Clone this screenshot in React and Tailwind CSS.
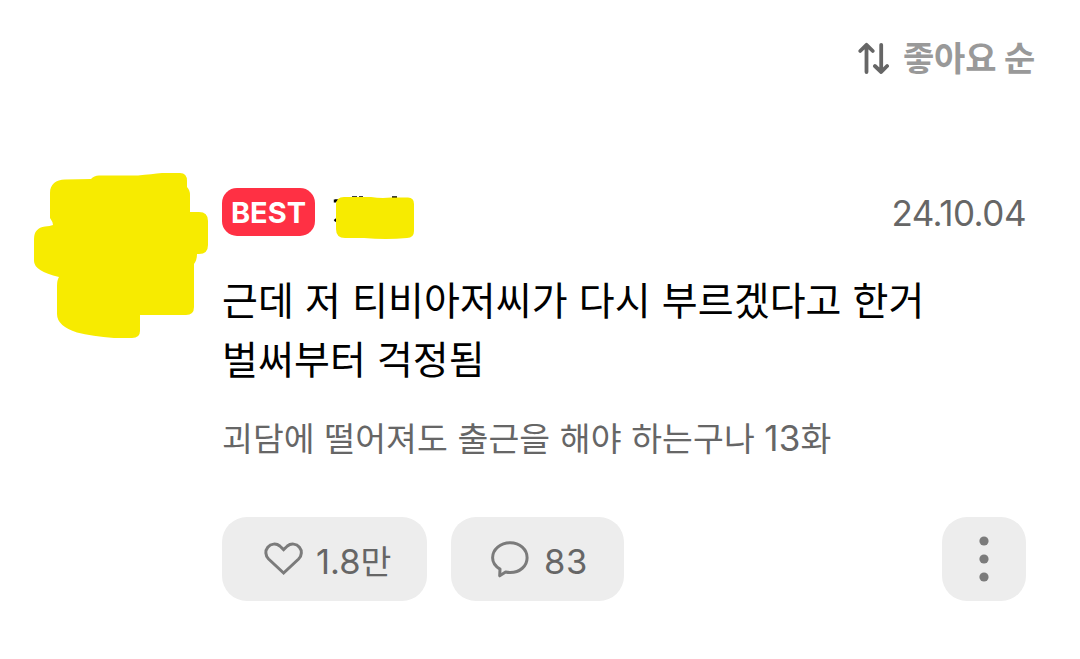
const ink = "font-['Inter','Noto_Sans_CJK_KR',sans-serif]";

function SortIcon() {
  return (
    <svg width="32" height="34" viewBox="0 0 32 34" className="shrink-0" fill="none" stroke="#666" strokeWidth="3.8" strokeLinecap="round" strokeLinejoin="round">
      <path d="M9.5 30V3.2M3.2 9L9.5 2.8L15.8 9" />
      <path d="M24.2 2.8V29.5M17.9 24L24.2 30L30.1 24" />
    </svg>
  );
}

function HeartIcon() {
  return (
    <svg width="40" height="34" viewBox="0 0 40 34" className="shrink-0" fill="none" stroke="#7b7b7b" strokeWidth="3" strokeLinejoin="miter">
      <path d="M19.6 31L4.6 17C1.2 13.6 1 8.6 3.8 5.2C6.8 1.6 12.2 1 15.8 4L19.6 7.6L23.4 4C27 1 32.4 1.6 35.4 5.2C38.2 8.6 38 13.6 34.6 17Z" />
    </svg>
  );
}

function BubbleIcon() {
  return (
    <svg width="38" height="37" viewBox="0 0 38 37" className="shrink-0" fill="none" stroke="#7b7b7b" strokeWidth="3" strokeLinejoin="round">
      <path d="M19.2 1.7C28.9 1.7 36.1 8.6 36.1 16.7C36.1 25.1 28.9 31.5 19.2 31.5C17.6 31.5 16 31.3 14.6 31L8.7 34.8L9 28.1C4.6 25.4 1.6 21.3 1.6 16.7C1.6 8.6 9.4 1.7 19.2 1.7Z" />
    </svg>
  );
}

function AvatarCover() {
  return (
    <svg width="174" height="166" viewBox="34 173 174 166" className="block" fill="#f7eb00">
      <path d="M50 193C50 184 56 180 65 179.5Q79 179 91 179Q94 175.5 99 175.5L138 175.5Q152 174 162 173L180 173Q187 173 187 181V187Q190 190 190 195V212H199Q208 212 208 221V245Q208 254 199 254H197Q197 260 194 264V307Q194 315 186 315H140V331Q140 338 132 338H114Q92 336 77 332.5Q57 326 57 314V286Q57 280 59 277Q34 271 34 261V239Q34 228 45 226.5Q50 226 53 225Q53 222 50 218Z" />
    </svg>
  );
}

export default function App() {
  return (
    <main className={`${ink} flex h-[659px] w-[1080px] flex-col overflow-hidden bg-white text-[#666]`}>
      <header className="flex h-[118px] items-center justify-end gap-[14px] pr-[45px]">
        <SortIcon />
        <span className="w-[132px] whitespace-nowrap text-[34px] leading-[44px] font-bold tracking-[-0.2px] text-[#999]">좋아요 순</span>
      </header>

      <article className="flex pl-[34px] pt-[55px]">
        <div className="w-[188px] shrink-0">
          <AvatarCover />
        </div>

        <div className="flex w-[804px] flex-col pt-[15px]">
          <div className="flex h-12 items-center">
            <span className="flex h-12 w-[93px] items-center justify-center rounded-[15px] bg-[#ff3044] text-[29px] leading-none font-bold text-white">BEST</span>
            <div className="ml-[18px] mt-[11px] h-[44px] w-[82px]">
              <svg width="82" height="44" viewBox="333 196 82 44" className="block">
                <path d="M335 200.5H338M335 202.5V199.5M334.5 221L337 219M352 197.5H357M359 197.5H363M392 197.5H397" stroke="#000" strokeWidth="2.4" />
                <path d="M336 205Q336 197 344 197H371Q381 198.5 391 197.5H408Q414 197.5 414 204V231Q414 238 407 238Q386 240 364 238H345Q336 238 336 229Z" fill="#f7eb00" />
              </svg>
            </div>
            <time className="ml-auto whitespace-nowrap pt-[2px] text-[35px] leading-[48px] tracking-[-0.5px]">24.10.04</time>
          </div>

          <p className="mt-[35px] whitespace-nowrap text-[39px] leading-[59px] tracking-[0.08px] text-black">
            근데 저 티비아저씨가 다시 부르겠다고 한거
            <br />
            벌써부터 걱정됨
          </p>
          <p className="mt-[26px] whitespace-nowrap text-[33.5px] leading-[48px] tracking-[0.1px]">
            괴담에 떨어져도 출근을 해야 하는구나 <span className="text-[35px] leading-none">13</span>화
          </p>

          <div className="mt-[54px] flex h-[84px] gap-6">
            <button className="flex w-[205px] items-center rounded-[25px] bg-[#ededed] pl-[42px]">
              <HeartIcon />
              <span className="ml-[12px] whitespace-nowrap pt-[5px] text-[33.5px] leading-[44px]">
                <span className="text-[34.5px] leading-none">1.8</span>만
              </span>
            </button>
            <button className="flex w-[173px] items-center rounded-[25px] bg-[#ededed] pl-[40px]">
              <BubbleIcon />
              <span className="ml-[15px] pt-[5px] text-[34.5px] leading-[44px] tracking-[0.6px]">83</span>
            </button>
            <button className="ml-auto flex w-[84px] items-center justify-center rounded-[25px] bg-[#ededed]">
              <svg width="10" height="46" viewBox="0 0 10 46" fill="#7b7b7b">
                <circle cx="5" cy="5" r="4.6" />
                <circle cx="5" cy="23" r="4.6" />
                <circle cx="5" cy="41" r="4.6" />
              </svg>
            </button>
          </div>
        </div>
      </article>
    </main>
  );
}
